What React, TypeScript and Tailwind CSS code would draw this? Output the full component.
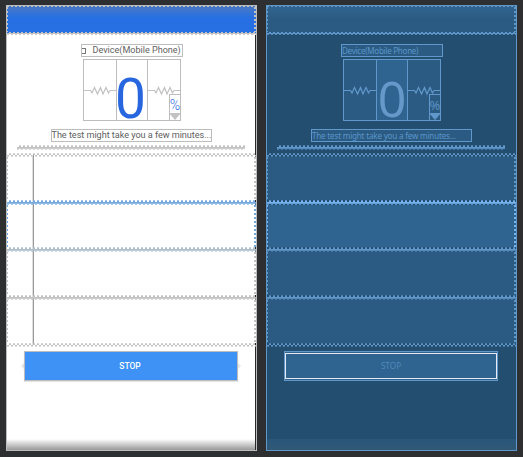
type Mode = "design" | "blueprint";

const tones = {
  gray: "text-[#c2c2c2]",
  slate: "text-[#aebecb]",
  sky: "text-[#73a9dc]",
  steel: "text-[#6198cc]",
  bright: "text-[#77b3f0]",
};
type Tone = keyof typeof tones;

const dots = "bg-[repeating-linear-gradient(90deg,currentColor_0_2px,transparent_2px_4px)]";
const dotsShifted = "bg-[repeating-linear-gradient(90deg,transparent_0_2px,currentColor_2px_4px)]";
const dotsDown = "bg-[repeating-linear-gradient(180deg,currentColor_0_2px,transparent_2px_4px)]";

function Spring({ tone, thick = false }: { tone: Tone; thick?: boolean }) {
  return (
    <div className={`shrink-0 ${tones[tone]}`}>
      <div className={`h-px opacity-70 ${dotsShifted}`} />
      <div className={`h-px ${dotsShifted}`} />
      {thick && <div className="h-px bg-current" />}
      <div className={`h-px ${thick ? "bg-current opacity-80" : dots}`} />
      <div className={`h-px opacity-60 ${dots}`} />
    </div>
  );
}

function Row({ mode, tone, height, active = false }: { mode: Mode; tone: Tone; height: string; active?: boolean }) {
  const fill = mode === "design" ? "bg-white" : active ? "bg-[#306490]" : "bg-[#2b5b82]";
  return (
    <div className={`flex shrink-0 ${height} ${fill} ${tones[tone]}`}>
      <div className={`w-px ${dotsDown}`} />
      {mode === "design" && <div className="-my-[2px] ml-[24px] w-[2px] border-l border-r border-l-[#e0e0e0] border-r-[#999]" />}
      <div className={`ml-auto w-[2px] ${dotsDown}`} />
    </div>
  );
}

function Resistor() {
  return (
    <svg className="mt-[20px] block h-[22px] w-full" viewBox="0 0 32 22" preserveAspectRatio="none" fill="none" stroke="currentColor" strokeWidth="1.2">
      <path d="M0 10.5H6.5L8 13L10.5 7.5L13.5 14L16.5 7.5L19 14L22 7.5L24.5 13L26 10.5H32" />
    </svg>
  );
}

function Panel({ mode }: { mode: Mode }) {
  const design = mode === "design";
  const line = design ? "border-[#bdbdbd]" : "border-[#6198cc]";
  const base: Tone = design ? "gray" : "steel";
  const selected: Tone = design ? "sky" : "bright";
  const label = design
    ? "font-['Roboto',sans-serif] text-[#5e5e5e] bg-white"
    : "font-['Noto_Sans',sans-serif] text-[#5a95ca] bg-[#2b5b82]";
  return (
    <section className={`flex h-[446px] w-[251px] shrink-0 flex-col border ${line} ${design ? "bg-white" : "bg-[#234e70]"}`}>
      <header
        className={`flex h-[26px] shrink-0 flex-col ${tones[base]} ${
          design ? "bg-linear-to-b from-[#4a78c3] to-[#2670e3] to-45%" : "bg-linear-to-b from-[#316590] to-[#2b5b82] to-50%"
        }`}
      >
        <div className={`h-px ${dots}`} />
        <div className="flex flex-1 justify-between">
          <div className={`w-px ${dotsDown}`} />
          <div className={`w-[2px] ${dotsDown}`} />
        </div>
      </header>
      <div className={`h-px shrink-0 ${design ? "bg-[#2670e3]" : "bg-[#2b5b82]"} ${tones[base]}`}>
        <div className={`h-px ${dotsShifted}`} />
      </div>
      <div className={`h-px shrink-0 bg-current ${tones[base]}`} />
      <div className={`h-px shrink-0 opacity-80 ${dots} ${tones[base]}`} />

      <div className={`flex flex-1 flex-col ${design ? "border-r border-[#292929]" : ""}`}>
        <div className={`ml-[74px] mt-[9px] flex h-[13px] w-[102px] shrink-0 items-center whitespace-nowrap border ${line} ${label} ${design ? "text-[9.05px]" : "text-[8.1px] tracking-[-0.3px]"} leading-[11px]`}>
          {design && <span className="mr-[6.5px] h-[6px] w-[4px] shrink-0 border border-l-0 border-[#777]" />}
          <span>Device(Mobile Phone)</span>
        </div>

        <div className={`ml-[76px] mt-[2px] grid h-[62px] w-[98px] shrink-0 grid-cols-[32px_32px_32px] border ${line} ${tones[base]} ${design ? "" : "bg-[#2b5b82]"}`}>
          <Resistor />
          <div className={`flex h-[60px] items-center justify-center border-x ${line} ${design ? "" : "bg-[#306490]"}`}>
            <span
              className={
                design
                  ? "relative -left-[1.5px] top-[9px] font-['Roboto',sans-serif] text-[55px] leading-[40px] text-[#2866df]"
                  : "relative top-[8px] font-['Noto_Sans',sans-serif] text-[50px] leading-[40px] text-[#6699c9]"
              }
            >
              0
            </span>
          </div>
          <div className="relative">
            <Resistor />
            <div className={`absolute bottom-0 right-0 flex h-[26px] w-[11px] flex-col items-center border-l border-t ${line} ${design ? "bg-white" : "bg-[#2b5b82]"}`}>
              <span className={`leading-[21px] ${design ? "font-['Roboto',sans-serif] text-[14px] font-light text-[#2866df]" : "font-['Noto_Sans',sans-serif] text-[13px] text-[#5b91c4]"}`}>%</span>
              <span className="absolute bottom-0 border-x-[6px] border-t-[7px] border-x-transparent border-t-current" />
            </div>
          </div>
        </div>

        <div className={`ml-[44px] mt-[8px] h-[13px] w-[161px] shrink-0 whitespace-nowrap border ${line} ${label} ${design ? "-indent-[0.5px] text-[9.1px] tracking-[-0.03px]" : "text-[8.1px] tracking-[-0.2px]"} leading-[11px]`}>
          The test might take you a few minutes...
        </div>
        <div className="ml-[10px] mt-[3px] w-[228px]"><Spring tone={base} thick /></div>

        <div className={`mt-[3px] flex flex-col ${design ? "-mr-px" : ""}`}>
          <Spring tone={base} />
          <Row mode={mode} tone={base} height="h-[43px]" />
          <Spring tone={selected} thick />
          <Row mode={mode} tone={selected} height="h-[42px]" active />
          <Spring tone={design ? "slate" : "steel"} thick />
          <Row mode={mode} tone={base} height="h-[43px]" />
          <Spring tone={base} thick />
          <Row mode={mode} tone={base} height="h-[43px]" />
          <Spring tone={base} />
        </div>

        <div className={`mt-[4px] flex shrink-0 items-center ${design ? "pl-[14px]" : "pl-[17px]"}`}>
          {design && <span className="border-y-[3px] border-r-[3px] border-y-transparent border-r-[#e6e6e6]" />}
          <button
            className={`flex h-[30px] w-[214px] shrink-0 border ${line} ${
              design
                ? "bg-[#3e92f5] pr-[2px] font-['Roboto',sans-serif] text-[8.5px] font-medium text-white shadow-[0_1px_1px_#0000001a]"
                : "bg-[#306490] py-px font-['Noto_Sans',sans-serif] text-[8.2px] text-[#5089bd]"
            }`}
          >
            <span className={`flex h-full w-full items-center justify-center ${design ? "" : "border border-[#e8e8f4]"}`}>STOP</span>
          </button>
          {design && <span className="border-y-[3px] border-l-[3px] border-y-transparent border-l-[#e6e6e6]" />}
        </div>
        <div className={`mt-auto h-[11px] shrink-0 bg-linear-to-b ${design ? "from-white to-[#9a9a9a]" : "from-[#28577b] to-[#315875]"}`} />
      </div>
    </section>
  );
}

export default function App() {
  return (
    <main className="flex h-[457px] w-[523px] gap-[9px] overflow-hidden bg-[#2d2f30] pl-[6px] pt-[5px]">
      <Panel mode="design" />
      <Panel mode="blueprint" />
    </main>
  );
}
